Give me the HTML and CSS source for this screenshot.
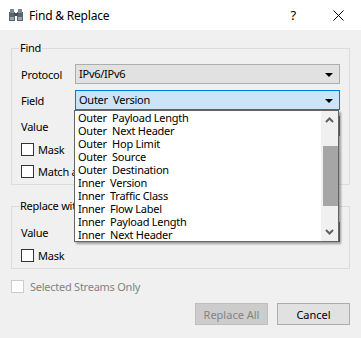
FILE: index.html
```html
<!DOCTYPE html>
<html lang="en">
<head>
  <meta charset="UTF-8">
  <title>Find &amp; Replace</title>
  <link rel="stylesheet" href="styles.css">
</head>
<body>
  <div class="titlebar">
    <svg class="app-icon" width="16" height="14" viewBox="0 0 16 14">
      <rect x="1" y="4" width="6" height="9" fill="#5a6470"/>
      <rect x="9" y="4" width="6" height="9" fill="#5a6470"/>
      <rect x="2" y="1" width="4" height="4" fill="#7c8794"/>
      <rect x="10" y="1" width="4" height="4" fill="#7c8794"/>
      <rect x="6" y="5" width="4" height="3" fill="#46505b"/>
      <rect x="2" y="9" width="4" height="3" fill="#9aa4ae"/>
      <rect x="10" y="9" width="4" height="3" fill="#9aa4ae"/>
    </svg>
    <span class="title">Find &amp; Replace</span>
    <span class="help">?</span>
    <svg class="close" width="11" height="11" viewBox="0 0 11 11">
      <path d="M0.5 0.5 L10.5 10.5 M10.5 0.5 L0.5 10.5" stroke="#000" stroke-width="1"/>
    </svg>
  </div>

  <div class="dialog">
    <fieldset class="group find-group">
      <legend>Find</legend>
      <div class="form-row">
        <span class="label">Protocol</span>
        <div class="combo">IPv6/IPv6<span class="arrow"></span></div>
      </div>
      <div class="form-row">
        <span class="label">Field</span>
        <div class="combo focused">Outer&nbsp; Version<span class="arrow"></span></div>
      </div>
      <div class="form-row">
        <span class="label">Value</span>
        <div class="line-edit"></div>
      </div>
      <label class="check first"><span class="box"></span>Mask</label>
      <label class="check"><span class="box"></span>Match any</label>

      <div class="popup">
        <ul class="items">
          <li>Outer&nbsp; Payload Length</li>
          <li>Outer&nbsp; Next Header</li>
          <li>Outer&nbsp; Hop Limit</li>
          <li>Outer&nbsp; Source</li>
          <li>Outer&nbsp; Destination</li>
          <li>Inner&nbsp; Version</li>
          <li>Inner&nbsp; Traffic Class</li>
          <li>Inner&nbsp; Flow Label</li>
          <li>Inner&nbsp; Payload Length</li>
          <li>Inner&nbsp; Next Header</li>
        </ul>
        <div class="scrollbar">
          <svg class="sb-arrow" width="9" height="6" viewBox="0 0 9 6">
            <path d="M1 5 L4.5 1.5 L8 5" fill="none" stroke="#606060" stroke-width="2"/>
          </svg>
          <div class="sb-track"><div class="sb-thumb"></div></div>
          <svg class="sb-arrow" width="9" height="6" viewBox="0 0 9 6">
            <path d="M1 1 L4.5 4.5 L8 1" fill="none" stroke="#606060" stroke-width="2"/>
          </svg>
        </div>
      </div>
    </fieldset>

    <fieldset class="group replace-group">
      <legend>Replace with</legend>
      <div class="form-row">
        <span class="label">Value</span>
        <div class="line-edit"></div>
      </div>
      <label class="check first"><span class="box"></span>Mask</label>
    </fieldset>

    <label class="check disabled"><span class="box"></span>Selected Streams Only</label>

    <div class="buttons">
      <button class="btn" disabled>Replace All</button>
      <button class="btn">Cancel</button>
    </div>
  </div>
</body>
</html>
```

FILE: styles.css
```css
body {
  margin: 0;
  background: #f0f0f0;
  font-family: "Noto Sans", "Liberation Sans", sans-serif;
  font-size: 11px;
  letter-spacing: -0.25px;
  color: #000;
  width: 361px;
  height: 338px;
  overflow: hidden;
}
.titlebar {
  height: 30px;
  background: #fff;
  display: flex;
  align-items: center;
  font-size: 12px;
  letter-spacing: -0.2px;
}
.app-icon {
  margin-left: 8px;
}
.title {
  margin-left: 5px;
  flex: 1;
}
.help {
  margin-right: 37px;
  font-size: 13px;
}
.close {
  margin-right: 17px;
}
.dialog {
  padding: 0 11px;
}
.group {
  border: 1px solid #dcdcdc;
  margin: 10px 0 0;
  padding: 8px 9px 6px 8px;
  position: relative;
}
.group legend {
  padding: 0 1px;
  margin-left: -1px;
  line-height: 16px;
}
.form-row {
  display: flex;
  align-items: center;
  height: 20px;
  margin-bottom: 6px;
}
.label {
  width: 54px;
  flex-shrink: 0;
  padding-left: 1px;
}
.combo {
  flex: 1;
  height: 18px;
  line-height: 18px;
  border: 1px solid #adadad;
  background: #e1e1e1;
  padding-left: 3px;
  position: relative;
}
.combo.focused {
  border-color: #0078d7;
  background: #cce4f7;
}
.arrow {
  position: absolute;
  right: 6px;
  top: 8px;
  border-left: 4px solid transparent;
  border-right: 4px solid transparent;
  border-top: 4px solid #000;
}
.line-edit {
  flex: 1;
  height: 18px;
  border: 1px solid #7a7a7a;
  background: #fff;
}
.check {
  display: flex;
  align-items: center;
  height: 13px;
  margin-top: 9px;
}
.check.first {
  margin-top: 7px;
}
.check .box {
  width: 11px;
  height: 11px;
  border: 1px solid #333;
  background: #fff;
  margin: 0 4px 0 1px;
}
.check.disabled {
  margin-top: 11px;
  color: #838383;
}
.check.disabled .box {
  border-color: #cccccc;
  margin: 0 6px 0 0;
}
.replace-group {
  margin-top: 13px;
}
.replace-group .form-row {
  margin-top: 0;
}
.replace-group .check.first {
  margin-top: 7px;
}
.popup {
  position: absolute;
  left: 62px;
  top: 54px;
  width: 263px;
  height: 130px;
  border: 1px solid #646464;
  background: #fff;
  box-shadow: 2px 2px 2px rgba(0, 0, 0, 0.35);
  display: flex;
  z-index: 2;
}
.items {
  list-style: none;
  margin: 0;
  padding: 0;
  flex: 1;
}
.items li {
  height: 13px;
  line-height: 13px;
  padding-left: 3px;
  white-space: nowrap;
}
.scrollbar {
  width: 17px;
  background: #f0f0f0;
  display: flex;
  flex-direction: column;
  align-items: center;
}
.sb-arrow {
  margin: 6px 0;
}
.sb-track {
  flex: 1;
  width: 100%;
  padding-top: 17px;
}
.sb-thumb {
  height: 60px;
  margin-left: 2px;
  background: #a6a6a6;
}
.buttons {
  display: flex;
  justify-content: flex-end;
  gap: 9px;
  margin-top: 10px;
}
.btn {
  font: inherit;
  height: 22px;
  width: 73px;
  padding: 0;
  border: 1px solid #adadad;
  background: #e1e1e1;
  color: #000;
}
.btn:disabled {
  border-color: #bfbfbf;
  background: #cccccc;
  color: #838383;
}
```
